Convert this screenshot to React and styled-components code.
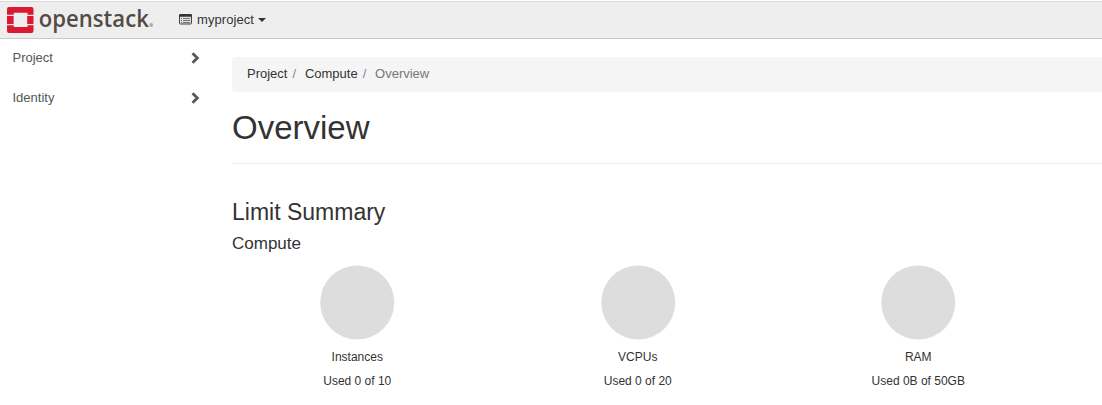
import React from "react";
import styled, { createGlobalStyle } from "styled-components";

const GlobalStyle = createGlobalStyle`
  * { box-sizing: border-box; }
  body {
    margin: 0;
    overflow: hidden;
    background: #fff;
    color: #333;
    font: 13px/18px "Liberation Sans", Arial, sans-serif;
  }
`;

const Navbar = styled.header`
  display: flex;
  height: 38px;
  margin-top: 1px;
  background: #eee;
  border-top: 1px solid #d9d9d9;
  border-bottom: 1px solid #c9c9c9;
`;

const Brand = styled.div`
  width: 179px;
  height: 36px;
  svg { display: block; }
`;

const ProjectPicker = styled.div`
  display: flex;
  align-items: center;
  height: 35px;
  color: #333;
`;

const PickerLabel = styled.span`
  margin: 0 4px 0 5px;
  letter-spacing: 0.07px;
`;

const Body = styled.div`
  display: flex;
`;

const Sidebar = styled.nav`
  flex: none;
  width: 217px;
`;

const SidebarItem = styled.div`
  display: flex;
  align-items: center;
  justify-content: space-between;
  height: 40px;
  padding: 0 17px 2px 12.5px;
  color: #555;
`;

const Main = styled.main`
  flex: 1;
  min-width: 0;
  padding: 18px 0 0 15px;
`;

const Breadcrumb = styled.ol`
  display: flex;
  align-items: center;
  height: 35px;
  margin: 0;
  padding: 0 15px 2px;
  list-style: none;
  background: #f5f5f5;
  border-radius: 4px 0 0 4px;
`;

const Crumb = styled.li`
  color: ${(p) => (p.$active ? "#777" : "#333")};
  &:not(:first-child)::before {
    content: "/";
    padding: 0 8.8px 0 5px;
    color: #888;
  }
`;

const PageTitle = styled.h1`
  margin: 17px 0 0;
  padding-bottom: 16px;
  border-bottom: 1px solid #eee;
  font-size: 33px;
  line-height: 38px;
  font-weight: 400;
`;

const SectionTitle = styled.h3`
  margin: 35px 0 0;
  font-size: 23px;
  line-height: 26px;
  font-weight: 400;
`;

const GroupTitle = styled.h4`
  margin: 9px 0 0;
  font-size: 17px;
  line-height: 19px;
  font-weight: 400;
`;

const Quotas = styled.div`
  display: grid;
  grid-template-columns: repeat(4, 280.5px);
  margin: 12px 0 0 -15px;
`;

const Quota = styled.div`
  display: flex;
  flex-direction: column;
  align-items: center;
  font-size: 12px;
`;

const PieChart = styled.svg`
  display: block;
  width: 76px;
  height: 76px;
  margin: -1px 0 8px;
`;

const QuotaText = styled.div`
  height: 18px;
  margin-bottom: 6px;
`;

const Logo = () => (
  <svg width="170" height="36" viewBox="0 2 170 36" role="img" aria-label="openstack">
    <path d="M7.5 14h26v12h-26z" fill="#f9dfe2" />
    <path d="M13.5 12.5h14v14.5h-14z" fill="#eee" />
    <g fill="#da1a32">
      <path d="M9 7h22.5a2 2 0 0 1 2 2v5.8h-6V12.8h-13.7v2H7V9a2 2 0 0 1 2-2z" />
      <path d="M7 16h6.6v8H7zM27.2 16h6.3v8h-6.3z" />
      <path d="M7 25.2h6.8v1.8h13.7v-1.8h6V31a2 2 0 0 1-2 2H9a2 2 0 0 1-2-2z" />
    </g>
    <text
      x="38.8" y="26.5" fill="#544b45" fontFamily="'Open Sans', 'Noto Sans', sans-serif"
      fontSize="23" fontWeight="600" textLength="110" lengthAdjust="spacingAndGlyphs"
    >openstack</text>
    <circle cx="151.2" cy="25" r="1.9" fill="#aaa" />
  </svg>
);

const ListIcon = () => (
  <svg width="13" height="11" viewBox="0 0 13 11">
    <rect x=".5" y=".5" width="12" height="9.5" rx=".8" fill="#ddd" stroke="#444" />
    <path d="M1 0h11l1 1v1.8H0V1z" fill="#333" />
    <path d="M2 4.5h1M4 4.5h7M2 6.5h1M4 6.5h7M2 8.5h1M4 8.5h7" stroke="#777" />
  </svg>
);

const Caret = () => (
  <svg width="8" height="4" viewBox="0 0 8 4">
    <path d="M0 0h8L4 4z" fill="#333" />
  </svg>
);

const Chevron = () => (
  <svg width="9" height="12" viewBox="0 0 9 12">
    <path d="M1.5 1.3 6.4 6 1.5 10.7" fill="none" stroke="#555" strokeWidth="2.7" />
  </svg>
);

const Pie = () => (
  <PieChart viewBox="0 0 76 76">
    <circle cx="38.25" cy="38.5" r="37" fill="#ddd" />
  </PieChart>
);

const sections = ["Project", "Identity"];
const crumbs = ["Project", "Compute", "Overview"];
const quotas = [
  { name: "Instances", usage: "Used 0 of 10" },
  { name: "VCPUs", usage: "Used 0 of 20" },
  { name: "RAM", usage: "Used 0B of 50GB" },
];

export default function App() {
  return (
    <>
      <GlobalStyle />
      <Navbar>
        <Brand><Logo /></Brand>
        <ProjectPicker>
          <ListIcon />
          <PickerLabel>myproject</PickerLabel>
          <Caret />
        </ProjectPicker>
      </Navbar>
      <Body>
        <Sidebar>
          {sections.map((name) => (
            <SidebarItem key={name}>{name}<Chevron /></SidebarItem>
          ))}
        </Sidebar>
        <Main>
          <Breadcrumb>
            {crumbs.map((name, i) => (
              <Crumb key={name} $active={i === crumbs.length - 1}>{name}</Crumb>
            ))}
          </Breadcrumb>
          <PageTitle>Overview</PageTitle>
          <SectionTitle>Limit Summary</SectionTitle>
          <GroupTitle>Compute</GroupTitle>
          <Quotas>
            {quotas.map((q) => (
              <Quota key={q.name}>
                <Pie />
                <QuotaText>{q.name}</QuotaText>
                <QuotaText>{q.usage}</QuotaText>
              </Quota>
            ))}
          </Quotas>
        </Main>
      </Body>
    </>
  );
}
